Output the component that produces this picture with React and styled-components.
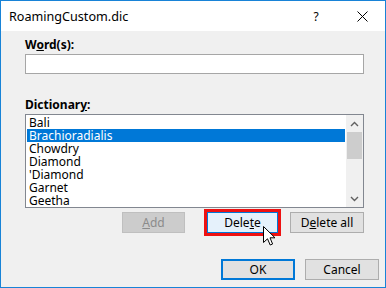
import React from "react";
import styled, { createGlobalStyle, css } from "styled-components";

const Global = createGlobalStyle`
  html, body { margin: 0; padding: 0; background: #fff; }
  body { font-family: "Noto Sans", "Open Sans", Arial, sans-serif; font-size: 12px; color: #000; }
  * { box-sizing: border-box; }
`;

const Window = styled.div`
  position: relative;
  width: 386px;
  height: 288px;
  border: 1px solid #1883d7;
  background: #f0f0f0;
  display: flex;
  flex-direction: column;
  overflow: hidden;
`;

const TitleBar = styled.div`
  height: 30px;
  background: #fff;
  display: flex;
  align-items: center;
  padding-left: 8px;
`;

const Title = styled.span`
  font-size: 12.6px;
  flex: 1;
`;

const TitleButton = styled.div`
  width: 46px;
  height: 30px;
  display: flex;
  align-items: center;
  justify-content: center;
  font-size: 12px;
`;

const Body = styled.div`
  flex: 1;
  padding: 6px 6px 0 24px;
  display: flex;
  flex-direction: column;
`;

const Label = styled.div`
  font-weight: bold;
  font-size: 12px;
  line-height: 16px;
  margin-bottom: 1px;
`;

const Input = styled.div`
  width: 339px;
  height: 20px;
  background: #fff;
  border: 1px solid #a6a6a6;
  margin-bottom: 23px;
`;

const ListBox = styled.div`
  width: 339px;
  height: 94px;
  background: #fff;
  border: 1px solid #828790;
  display: flex;
`;

const Items = styled.div`
  flex: 1;
  padding: 1px;
  overflow: hidden;
`;

const Item = styled.div`
  height: 13px;
  line-height: 13px;
  padding-left: 2px;
  white-space: nowrap;
  ${(p) =>
    p.$selected &&
    css`
      background: #0078d7;
      color: #fff;
    `}
`;

const ScrollBar = styled.div`
  width: 17px;
  background: #f0f0f0;
  display: flex;
  flex-direction: column;
  align-items: center;
`;

const ArrowBox = styled.div`
  width: 17px;
  height: 17px;
  display: flex;
  align-items: center;
  justify-content: center;
`;

const Track = styled.div`
  flex: 1;
  width: 17px;
  padding: 0 1px;
`;

const Thumb = styled.div`
  height: 27px;
  background: #cdcdcd;
`;

const Row = styled.div`
  display: flex;
  justify-content: flex-end;
  width: ${(p) => (p.$w ? `${p.$w}px` : "auto")};
  margin-top: ${(p) => p.$top}px;
  gap: ${(p) => p.$gap || 0}px;
`;

const Button = styled.div`
  width: ${(p) => p.$w}px;
  height: 21px;
  margin-right: ${(p) => p.$mr || 0}px;
  display: flex;
  align-items: center;
  justify-content: center;
  font-size: 12px;
  background: #e1e1e1;
  border: 1px solid #adadad;
  ${(p) =>
    p.$disabled &&
    css`
      background: #cccccc;
      border-color: #bfbfbf;
      color: #8b8b8b;
    `}
  ${(p) =>
    p.$hover &&
    css`
      background: #e5f1fb;
      border-color: #0078d7;
      outline: 3px solid #ee1111;
    `}
  ${(p) =>
    p.$default &&
    css`
      border: 2px solid #0078d7;
    `}
`;

const Cursor = styled.svg`
  position: absolute;
  left: 262px;
  top: 225px;
`;

const items = ["Bali", "Brachioradialis", "Chowdry", "Diamond", "'Diamond", "Garnet", "Geetha"];

export default function App() {
  return (
    <>
      <Global />
      <Window>
        <TitleBar>
          <Title>RoamingCustom.dic</Title>
          <TitleButton>?</TitleButton>
          <TitleButton>
            <svg width="11" height="11" viewBox="0 0 11 11">
              <path d="M0.5 0.5 L10.5 10.5 M10.5 0.5 L0.5 10.5" stroke="#000" strokeWidth="1" fill="none" />
            </svg>
          </TitleButton>
        </TitleBar>
        <Body>
          <Label>
            W<u>o</u>rd(s):
          </Label>
          <Input />
          <Label>
            Dictionar<u>y</u>:
          </Label>
          <ListBox>
            <Items>
              {items.map((t, i) => (
                <Item key={t} $selected={i === 1}>
                  {t}
                </Item>
              ))}
            </Items>
            <ScrollBar>
              <ArrowBox>
                <svg width="9" height="6" viewBox="0 0 9 6">
                  <path d="M1 5 L4.5 1.5 L8 5" stroke="#606060" strokeWidth="1.4" fill="none" />
                </svg>
              </ArrowBox>
              <Track>
                <Thumb />
              </Track>
              <ArrowBox>
                <svg width="9" height="6" viewBox="0 0 9 6">
                  <path d="M1 1 L4.5 4.5 L8 1" stroke="#606060" strokeWidth="1.4" fill="none" />
                </svg>
              </ArrowBox>
            </ScrollBar>
          </ListBox>
          <Row $top={4} $w={339}>
            <Button $w={63} $mr={22} $disabled>
              <u>A</u>dd
            </Button>
            <Button $w={71} $mr={12} $hover>
              Dele<u>t</u>e
            </Button>
            <Button $w={74}>
              D<u>e</u>lete all
            </Button>
          </Row>
          <Row $top={26} $gap={10}>
            <Button $w={74} $default>
              OK
            </Button>
            <Button $w={74}>Cancel</Button>
          </Row>
        </Body>
        <Cursor width="13" height="20" viewBox="0 0 13 20">
          <path
            d="M0.5 0.5 L0.5 16.5 L4.5 12.8 L7.2 19 L9.6 18 L7 11.8 L12 11.8 Z"
            fill="#fff"
            stroke="#000"
            strokeWidth="1"
            strokeLinejoin="miter"
          />
        </Cursor>
      </Window>
    </>
  );
}
